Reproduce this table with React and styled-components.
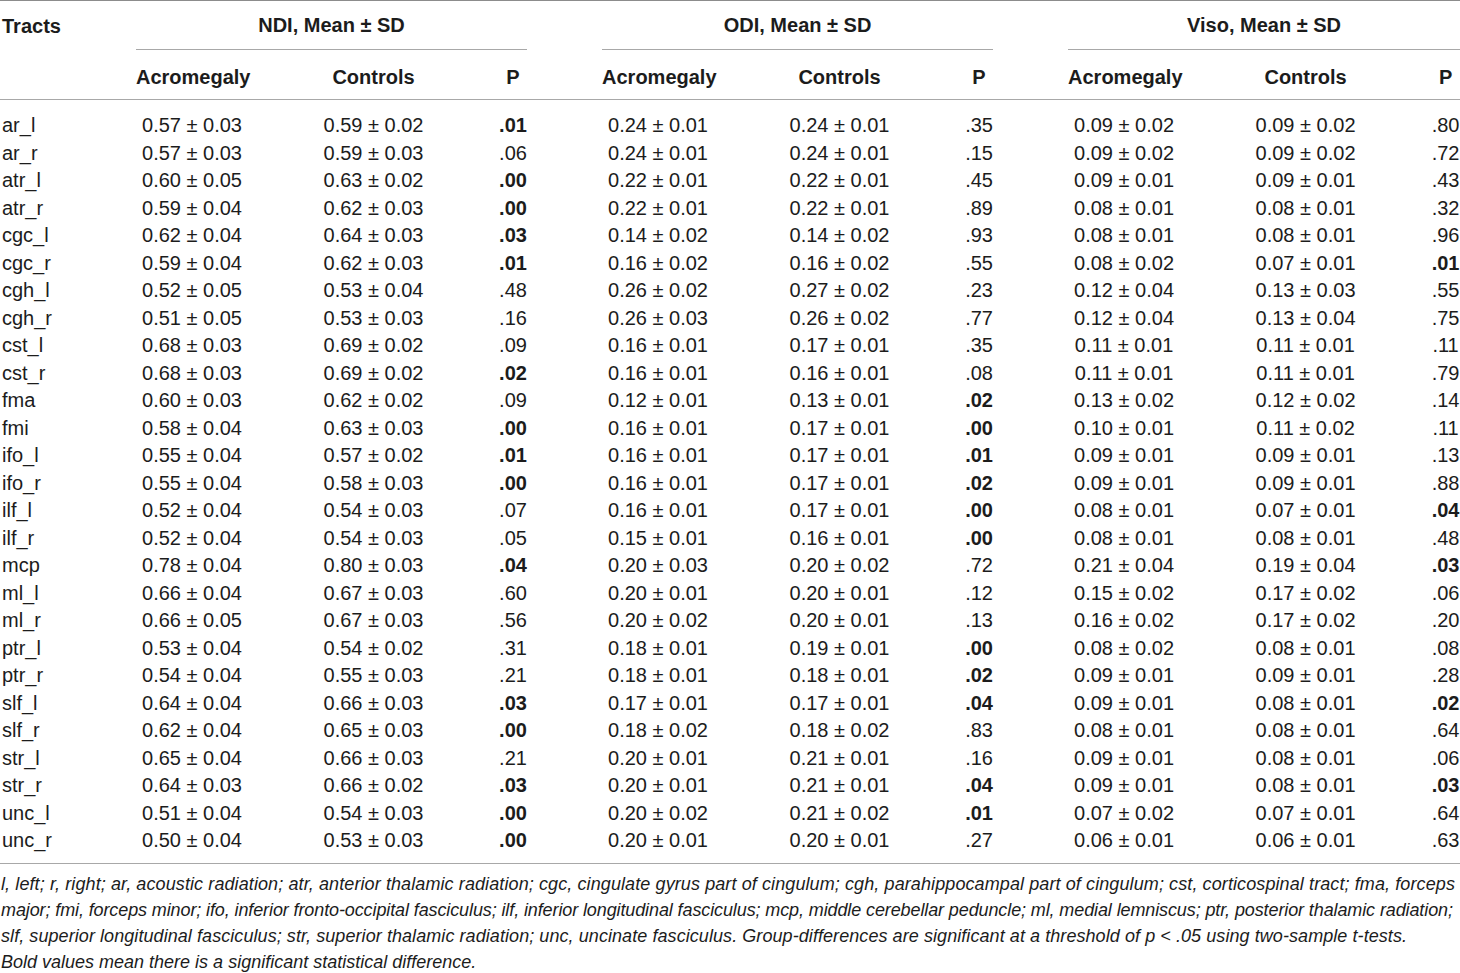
import React from 'react';
import styled, { createGlobalStyle } from 'styled-components';

const GlobalStyle = createGlobalStyle`
  html, body {
    margin: 0;
    padding: 0;
    background: #fff;
  }
  body {
    font-family: 'Liberation Sans', Arial, Helvetica, sans-serif;
    color: #1c1c1c;
  }
`;

const groups = ['NDI, Mean ± SD', 'ODI, Mean ± SD', 'Viso, Mean ± SD'];

// each row: tract, then [acromegaly, controls, p, bold] per group
const rows = [
  ['ar_l', ['0.57 ± 0.03', '0.59 ± 0.02', '.01', 1], ['0.24 ± 0.01', '0.24 ± 0.01', '.35'], ['0.09 ± 0.02', '0.09 ± 0.02', '.80']],
  ['ar_r', ['0.57 ± 0.03', '0.59 ± 0.03', '.06'], ['0.24 ± 0.01', '0.24 ± 0.01', '.15'], ['0.09 ± 0.02', '0.09 ± 0.02', '.72']],
  ['atr_l', ['0.60 ± 0.05', '0.63 ± 0.02', '.00', 1], ['0.22 ± 0.01', '0.22 ± 0.01', '.45'], ['0.09 ± 0.01', '0.09 ± 0.01', '.43']],
  ['atr_r', ['0.59 ± 0.04', '0.62 ± 0.03', '.00', 1], ['0.22 ± 0.01', '0.22 ± 0.01', '.89'], ['0.08 ± 0.01', '0.08 ± 0.01', '.32']],
  ['cgc_l', ['0.62 ± 0.04', '0.64 ± 0.03', '.03', 1], ['0.14 ± 0.02', '0.14 ± 0.02', '.93'], ['0.08 ± 0.01', '0.08 ± 0.01', '.96']],
  ['cgc_r', ['0.59 ± 0.04', '0.62 ± 0.03', '.01', 1], ['0.16 ± 0.02', '0.16 ± 0.02', '.55'], ['0.08 ± 0.02', '0.07 ± 0.01', '.01', 1]],
  ['cgh_l', ['0.52 ± 0.05', '0.53 ± 0.04', '.48'], ['0.26 ± 0.02', '0.27 ± 0.02', '.23'], ['0.12 ± 0.04', '0.13 ± 0.03', '.55']],
  ['cgh_r', ['0.51 ± 0.05', '0.53 ± 0.03', '.16'], ['0.26 ± 0.03', '0.26 ± 0.02', '.77'], ['0.12 ± 0.04', '0.13 ± 0.04', '.75']],
  ['cst_l', ['0.68 ± 0.03', '0.69 ± 0.02', '.09'], ['0.16 ± 0.01', '0.17 ± 0.01', '.35'], ['0.11 ± 0.01', '0.11 ± 0.01', '.11']],
  ['cst_r', ['0.68 ± 0.03', '0.69 ± 0.02', '.02', 1], ['0.16 ± 0.01', '0.16 ± 0.01', '.08'], ['0.11 ± 0.01', '0.11 ± 0.01', '.79']],
  ['fma', ['0.60 ± 0.03', '0.62 ± 0.02', '.09'], ['0.12 ± 0.01', '0.13 ± 0.01', '.02', 1], ['0.13 ± 0.02', '0.12 ± 0.02', '.14']],
  ['fmi', ['0.58 ± 0.04', '0.63 ± 0.03', '.00', 1], ['0.16 ± 0.01', '0.17 ± 0.01', '.00', 1], ['0.10 ± 0.01', '0.11 ± 0.02', '.11']],
  ['ifo_l', ['0.55 ± 0.04', '0.57 ± 0.02', '.01', 1], ['0.16 ± 0.01', '0.17 ± 0.01', '.01', 1], ['0.09 ± 0.01', '0.09 ± 0.01', '.13']],
  ['ifo_r', ['0.55 ± 0.04', '0.58 ± 0.03', '.00', 1], ['0.16 ± 0.01', '0.17 ± 0.01', '.02', 1], ['0.09 ± 0.01', '0.09 ± 0.01', '.88']],
  ['ilf_l', ['0.52 ± 0.04', '0.54 ± 0.03', '.07'], ['0.16 ± 0.01', '0.17 ± 0.01', '.00', 1], ['0.08 ± 0.01', '0.07 ± 0.01', '.04', 1]],
  ['ilf_r', ['0.52 ± 0.04', '0.54 ± 0.03', '.05'], ['0.15 ± 0.01', '0.16 ± 0.01', '.00', 1], ['0.08 ± 0.01', '0.08 ± 0.01', '.48']],
  ['mcp', ['0.78 ± 0.04', '0.80 ± 0.03', '.04', 1], ['0.20 ± 0.03', '0.20 ± 0.02', '.72'], ['0.21 ± 0.04', '0.19 ± 0.04', '.03', 1]],
  ['ml_l', ['0.66 ± 0.04', '0.67 ± 0.03', '.60'], ['0.20 ± 0.01', '0.20 ± 0.01', '.12'], ['0.15 ± 0.02', '0.17 ± 0.02', '.06']],
  ['ml_r', ['0.66 ± 0.05', '0.67 ± 0.03', '.56'], ['0.20 ± 0.02', '0.20 ± 0.01', '.13'], ['0.16 ± 0.02', '0.17 ± 0.02', '.20']],
  ['ptr_l', ['0.53 ± 0.04', '0.54 ± 0.02', '.31'], ['0.18 ± 0.01', '0.19 ± 0.01', '.00', 1], ['0.08 ± 0.02', '0.08 ± 0.01', '.08']],
  ['ptr_r', ['0.54 ± 0.04', '0.55 ± 0.03', '.21'], ['0.18 ± 0.01', '0.18 ± 0.01', '.02', 1], ['0.09 ± 0.01', '0.09 ± 0.01', '.28']],
  ['slf_l', ['0.64 ± 0.04', '0.66 ± 0.03', '.03', 1], ['0.17 ± 0.01', '0.17 ± 0.01', '.04', 1], ['0.09 ± 0.01', '0.08 ± 0.01', '.02', 1]],
  ['slf_r', ['0.62 ± 0.04', '0.65 ± 0.03', '.00', 1], ['0.18 ± 0.02', '0.18 ± 0.02', '.83'], ['0.08 ± 0.01', '0.08 ± 0.01', '.64']],
  ['str_l', ['0.65 ± 0.04', '0.66 ± 0.03', '.21'], ['0.20 ± 0.01', '0.21 ± 0.01', '.16'], ['0.09 ± 0.01', '0.08 ± 0.01', '.06']],
  ['str_r', ['0.64 ± 0.03', '0.66 ± 0.02', '.03', 1], ['0.20 ± 0.01', '0.21 ± 0.01', '.04', 1], ['0.09 ± 0.01', '0.08 ± 0.01', '.03', 1]],
  ['unc_l', ['0.51 ± 0.04', '0.54 ± 0.03', '.00', 1], ['0.20 ± 0.02', '0.21 ± 0.02', '.01', 1], ['0.07 ± 0.02', '0.07 ± 0.01', '.64']],
  ['unc_r', ['0.50 ± 0.04', '0.53 ± 0.03', '.00', 1], ['0.20 ± 0.01', '0.20 ± 0.01', '.27'], ['0.06 ± 0.01', '0.06 ± 0.01', '.63']],
];

// footnote lines as set in the source, with a letter-spacing nudge so each fills its measure
const notes = [
  ['l, left; r, right; ar, acoustic radiation; atr, anterior thalamic radiation; cgc, cingulate gyrus part of cingulum; cgh, parahippocampal part of cingulum; cst, corticospinal tract; fma, forceps', 0.1],
  ['major; fmi, forceps minor; ifo, inferior fronto-occipital fasciculus; ilf, inferior longitudinal fasciculus; mcp, middle cerebellar peduncle; ml, medial lemniscus; ptr, posterior thalamic radiation;', -0.11],
  ['slf, superior longitudinal fasciculus; str, superior thalamic radiation; unc, uncinate fasciculus. Group-differences are significant at a threshold of p < .05 using two-sample t-tests.', 0.07],
  ['Bold values mean there is a significant statistical difference.', 0],
];

const App = () => {
  return (
    <Wrapper>
      <GlobalStyle />
      <Table>
        <colgroup>
          <col style={{ width: 136 }} />
          {groups.map((g, i) => (
            <React.Fragment key={g}>
              <col style={{ width: 112 }} />
              <col style={{ width: 251 }} />
              <col style={{ width: i === 2 ? 29 : 28 }} />
              {i < 2 && <col style={{ width: 75 }} />}
            </React.Fragment>
          ))}
        </colgroup>
        <thead>
          <TopRow>
            <TractsHead rowSpan={2}>Tracts</TractsHead>
            {groups.map((g, i) => (
              <React.Fragment key={g}>
                <GroupHead colSpan={3}>{g}</GroupHead>
                {i < 2 && <Gap />}
              </React.Fragment>
            ))}
          </TopRow>
          <SubRow>
            {groups.map((g, i) => (
              <React.Fragment key={g}>
                <SubHead>Acromegaly</SubHead>
                <SubHead>Controls</SubHead>
                <SubHead>P</SubHead>
                {i < 2 && <SubHead />}
              </React.Fragment>
            ))}
          </SubRow>
        </thead>
        <tbody>
          {rows.map(([tract, ...vals], r) => (
            <DataRow key={tract} $first={r === 0} $last={r === rows.length - 1}>
              <Tract>{tract}</Tract>
              {vals.map(([a, c, p, bold], i) => (
                <React.Fragment key={i}>
                  <Cell>{a}</Cell>
                  <Cell>{c}</Cell>
                  <Cell $bold={!!bold}>{p}</Cell>
                  {i < 2 && <Cell />}
                </React.Fragment>
              ))}
            </DataRow>
          ))}
        </tbody>
      </Table>
      <Footnote>
        {notes.map(([line, spacing]) => (
          <NoteLine key={line} $spacing={spacing}>
            {line}
          </NoteLine>
        ))}
      </Footnote>
    </Wrapper>
  );
};

const Wrapper = styled.main`
  width: 1460px;
  height: 973px;
  overflow: hidden;
  background: #fff;
`;

const Table = styled.table`
  width: 1460px;
  table-layout: fixed;
  border-collapse: collapse;
  border-top: 1px solid #8c8c8c;
  border-bottom: 1px solid #a8a8a8;
  font-size: 20px;
  color: #1c1c1c;
`;

const TopRow = styled.tr`
  height: 49px;
`;

const TractsHead = styled.th`
  vertical-align: top;
  text-align: left;
  padding: 13px 0 0 2px;
  font-weight: 700;
  line-height: 24px;
  border-bottom: 1px solid #a8a8a8;
`;

const GroupHead = styled.th`
  text-align: center;
  padding: 0 0 1px;
  font-weight: 700;
  line-height: 24px;
  border-bottom: 1px solid #a8a8a8;
`;

const Gap = styled.th`
  padding: 0;
`;

const SubRow = styled.tr`
  height: 50px;
`;

const SubHead = styled.th`
  text-align: center;
  padding: 4px 0 0;
  font-weight: 700;
  line-height: 24px;
  border-bottom: 1px solid #a8a8a8;
`;

const DataRow = styled.tr`
  td {
    padding-top: ${(p) => (p.$first ? '12px' : '0')};
    padding-bottom: ${(p) => (p.$last ? '8px' : '0')};
  }
`;

const Tract = styled.td`
  text-align: left;
  padding-left: 2px;
  height: 27.5px;
  line-height: 27.5px;
  white-space: nowrap;
`;

const Cell = styled.td`
  text-align: center;
  padding-left: 0;
  padding-right: 0;
  height: 27.5px;
  line-height: 27.5px;
  white-space: nowrap;
  font-weight: ${(p) => (p.$bold ? 700 : 400)};
`;

const Footnote = styled.div`
  display: flex;
  flex-direction: column;
  padding: 7px 0 0 1px;
  font-size: 18px;
  font-style: italic;
  line-height: 26px;
  color: #1c1c1c;
`;

const NoteLine = styled.div`
  white-space: nowrap;
  letter-spacing: ${(p) => p.$spacing}px;
`;

export default App;
